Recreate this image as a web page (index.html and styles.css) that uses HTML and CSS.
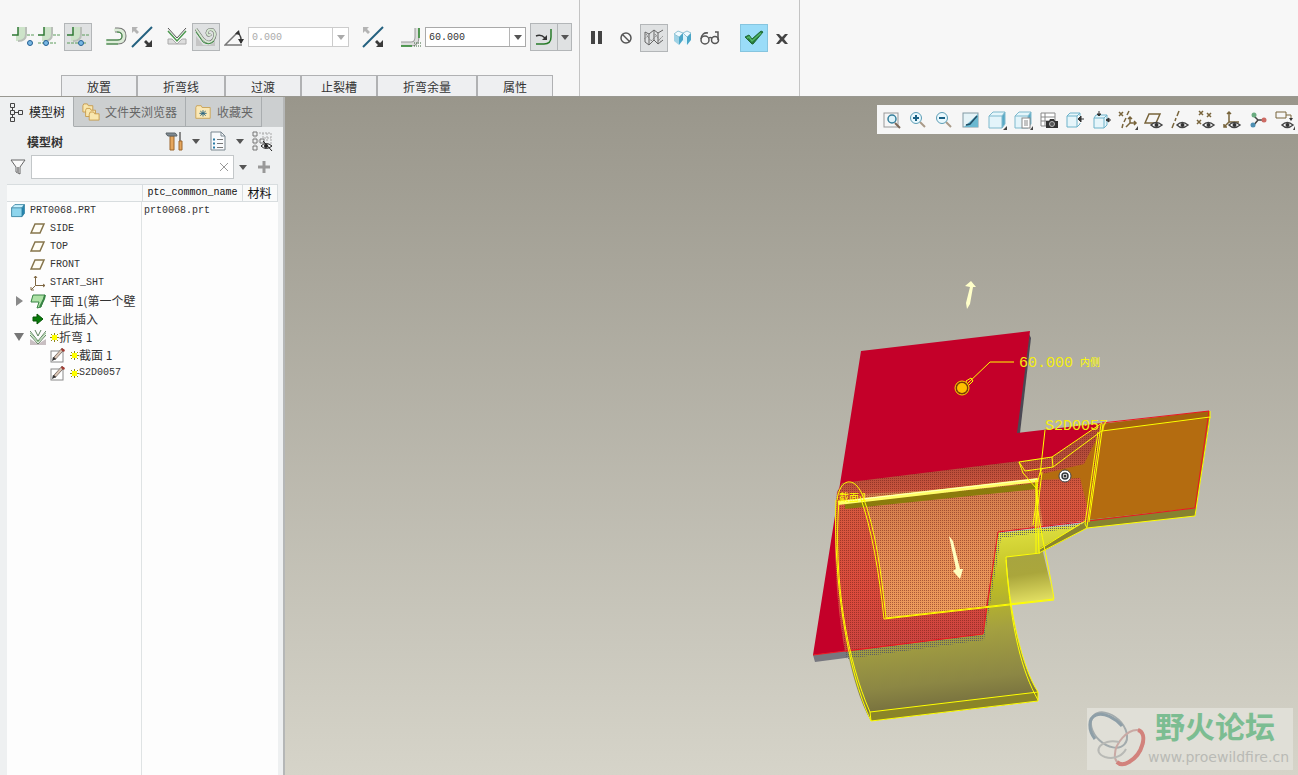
FILE: index.html
```html
<!DOCTYPE html>
<html lang="zh-CN">
<head>
  <meta charset="UTF-8" />
  <meta name="viewport" content="width=device-width, initial-scale=1.0" />
  <title>PRT0068.PRT</title>
  <link rel="stylesheet" href="styles.css">
</head>
<body>

  <!-- shared icons -->
  <svg class="sprite" aria-hidden="true">
    <symbol id="i-corner" viewBox="0 0 22 22">
      <path d="M6 1H14V8Q14 15 7 15H4V9H6Z" fill="#cde3c9" />
      <path d="M14 1V8Q14 15 6 15" fill="none" stroke="#b9bfb8" stroke-width="2" />
      <path d="M6 1V9H0" fill="none" stroke="#2f7a34" stroke-width="1.500" />
      <path d="M15 9H22" stroke="#5c9c5c" stroke-dasharray="3 1" />
    </symbol>
    <symbol id="i-flip" viewBox="0 0 22 22">
      <path d="M1 21L21 1" stroke="#23607f" stroke-width="2" />
      <path d="M1 1H7L5 3L8 6L6 8L3 5L1 7Z" fill="#b4b4b4" />
      <path d="M21 21H14L16 19L13 16L15 14L18 17L21 14Z" fill="#3a3a3a" />
    </symbol>
    <symbol id="i-plane" viewBox="0 0 16 16">
      <path d="M5 3H14L10 12H1Z" fill="#fffdf5" stroke="#86754c" stroke-width="1.500" />
    </symbol>
    <symbol id="i-cube" viewBox="0 0 20 20">
      <path d="M2 6L6 2H18L15 6Z" fill="#e5f6fb" />
      <path d="M15 6L18 2V14L15 18Z" fill="#58a9c6" />
      <rect x="2" y="6" width="13" height="12" rx="1" fill="#e3f4fa" />
      <path d="M2 6L6 2H18V14L15 18H2ZM2 6H15V18M15 6L18 2" fill="none" stroke="#7fb9cd" />
    </symbol>
    <symbol id="i-eye" viewBox="0 0 20 20">
      <path d="M7 15Q12 10 18 15Q12 20 7 15Z" fill="#fff" stroke="#444" stroke-width="1.500" />
      <circle cx="12.500" cy="15" r="2" fill="#333" />
    </symbol>
    <symbol id="i-sketch" viewBox="0 0 16 16">
      <rect x="1" y="4" width="12" height="11" fill="#fff" stroke="#8a8a8a" />
      <path d="M4 12L13 2" stroke="#4f4540" stroke-width="3" />
      <path d="M5 11L12 3" stroke="#dcc7b7" stroke-width="2" />
      <path d="M12 1L15 3L14 5L11 3Z" fill="#a23a32" />
      <path d="M2 14L3 10L6 12Z" fill="#333" />
    </symbol>
    <symbol id="i-star" viewBox="0 0 9 9">
      <path d="M4.500 0V9M0 4.500H9M1 1L8 8M8 1L1 8" stroke="#8f8a10" />
      <rect x="2" y="2" width="5" height="5" fill="#ffff00" />
    </symbol>
    <symbol id="i-down" viewBox="0 0 8 5">
      <path d="M0 0H8L4 5Z" fill="currentColor" />
    </symbol>
  </svg>

  <header class="ribbon">
    <section class="ribbon-main">
      <div class="tools">
        <div class="group">
          <button class="tool" aria-label="折弯线外"><svg viewBox="0 0 22 22"><use href="#i-corner" /><circle cx="18" cy="17" r="2.500" fill="#79b8e4" stroke="#245f93" /></svg></button>
          <button class="tool" aria-label="折弯线内"><svg viewBox="0 0 22 22"><use href="#i-corner" /><path d="M0 17H18" stroke="#5c9c5c" stroke-dasharray="3 1" /><circle cx="8" cy="17" r="2.500" fill="#79b8e4" stroke="#245f93" /></svg></button>
          <button class="tool tile" aria-label="两侧"><svg viewBox="0 0 22 22"><use href="#i-corner" /><path d="M0 17H20" stroke="#5c9c5c" stroke-dasharray="3 1" /><circle cx="14" cy="17" r="2.500" fill="#79b8e4" stroke="#245f93" /></svg></button>
        </div>
        <div class="group">
          <button class="tool" aria-label="更改固定侧"><svg viewBox="0 0 22 22"><path d="M2 16H13Q19 16 19 10Q19 4 13 4H10" fill="none" stroke="#777" stroke-width="5" /><path d="M1 16H13Q19 16 19 10Q19 4 13 4H9" fill="none" stroke="#dcecd8" stroke-width="3" /><path d="M1 14H12Q17 14 17 10Q17 6 12 6M1 18H13" fill="none" stroke="#3e9143" /></svg></button>
          <button class="tool" aria-label="反向"><svg><use href="#i-flip" /></svg></button>
        </div>
        <div class="group">
          <button class="tool" aria-label="角度折弯"><svg viewBox="0 0 22 22"><path d="M2 13H6L11 18L16 13H20V18H2Z" fill="#ddd" stroke="#aaa" /><path d="M2 2L11 12L20 2" fill="none" stroke="#555" /><path d="M2 5L11 15L20 5" fill="none" stroke="#4b984e" stroke-width="1.500" /></svg></button>
          <button class="tool tile" aria-label="滚动折弯"><svg viewBox="0 0 22 22"><path d="M1 10L8 19Q20 21 20 10V20H1Z" fill="#c5c5c5" /><path d="M1 3L8 13Q14 19 18 14Q22 8 18 4Q13 2 12 7Q13 11 16 8" fill="none" stroke="#666" stroke-width="3" /><path d="M1 3L8 13Q14 19 18 14Q22 8 18 4Q13 2 12 7Q13 11 16 8" fill="none" stroke="#d5e8d1" stroke-width="2" /><path d="M1 6L8 16Q14 20 19 15" fill="none" stroke="#3e9143" /></svg></button>
          <button class="tool narrow" aria-label="折弯角度"><svg viewBox="0 0 20 22"><path d="M18 19H1L14 6" fill="none" stroke="#777" stroke-width="1.500" /><path d="M13 6Q18 10 17 17" fill="none" stroke="#444" stroke-width="1.500" /><path d="M11 8L15 4L16 9ZM14 13H20L17 18Z" fill="#333" /></svg></button>
          <div class="combo off"><input type="text" value="0.000" aria-label="角度值" disabled /><button aria-label="角度列表" disabled><svg class="caret"><use href="#i-down" /></svg></button></div>
        </div>
        <div class="group">
          <button class="tool" aria-label="反向角度"><svg><use href="#i-flip" /></svg></button>
        </div>
        <div class="group radius">
          <button class="tool narrow" aria-label="折弯半径"><svg viewBox="0 0 20 22"><path d="M0 18H10Q16 18 16 11V2" fill="none" stroke="#999" stroke-width="5" /><path d="M0 18H10Q16 18 16 11V2" fill="none" stroke="#ddd" stroke-width="3" /><path d="M0 20H11M18 2V12" stroke="#2e8a2f" stroke-width="1.500" /><path d="M13 20H20M13 17H20" stroke="#3b693b" stroke-dasharray="1 1" /></svg></button>
          <div class="combo"><input type="text" value="60.000" aria-label="半径值" /><button aria-label="半径列表"><svg class="caret"><use href="#i-down" /></svg></button></div>
          <div class="split">
            <button aria-label="内侧半径"><svg viewBox="0 0 22 22"><path d="M18 3V11Q18 18 11 18H3" fill="none" stroke="#287b2a" stroke-width="1.500" /><path d="M3 10Q8 8 12 12" fill="none" stroke="#333" stroke-width="1.500" /><path d="M14 9V14H9Z" fill="#333" /></svg></button>
            <button aria-label="半径选项"><svg class="caret"><use href="#i-down" /></svg></button>
          </div>
        </div>
      </div>
      <nav class="ribbon-tabs">
        <button>放置</button>
        <button>折弯线</button>
        <button>过渡</button>
        <button class="tight">止裂槽</button>
        <button>折弯余量</button>
        <button>属性</button>
      </nav>
    </section>
    <section class="ribbon-confirm">
      <div class="group">
        <button class="tool" aria-label="暂停"><svg viewBox="0 0 22 22"><path d="M3 4H7V17H3ZM10 4H14V17H10Z" fill="#444" /></svg></button>
        <button class="tool" aria-label="无预览"><svg viewBox="0 0 22 22"><circle cx="12" cy="11" r="5" fill="none" stroke="#555" stroke-width="1.500" /><path d="M8 7L16 15" stroke="#555" stroke-width="1.500" /></svg></button>
        <button class="tool tile" aria-label="分离预览"><svg viewBox="0 0 22 22"><path d="M2 5L6 7L11 3L15 6L20 3M2 5V15L6 18V7M6 18L11 13V3M11 13L15 17V6M15 17L20 13" fill="none" stroke="#666" /><path d="M1 12L5 9M8 14L14 8M15 14L20 9M3 7L8 14M12 7L18 15" fill="none" stroke="#888" stroke-dasharray="2 1" /></svg></button>
        <button class="tool" aria-label="连接预览"><svg viewBox="0 0 22 22"><path d="M2 7L7 10V18L2 14Z" fill="#9fd2e5" /><path d="M7 10L11 6V13L7 18Z" fill="#4aa6c8" /><path d="M11 6L15 10V18L11 14Z" fill="#dbf4fc" /><path d="M15 10L19 6V13L15 18Z" fill="#4aa6c8" /><path d="M2 7L6 4L11 6L7 10ZM11 6L15 4L19 6L15 10Z" fill="#eefaff" stroke="#8fc2d4" /></svg></button>
        <button class="tool" aria-label="预览"><svg viewBox="0 0 22 22"><circle cx="7" cy="13" r="4" fill="none" stroke="#555" stroke-width="1.500" /><circle cx="17" cy="13" r="3.500" fill="none" stroke="#555" stroke-width="1.500" /><path d="M3 12Q4 5 10 6M11 11Q12 10 14 11M20 13V5H17" fill="none" stroke="#555" stroke-width="1.500" /></svg></button>
      </div>
      <div class="group">
        <button class="tool tile ok" aria-label="确定"><svg viewBox="0 0 22 22"><path d="M2 10L6 8L9 12L18 4L20 5L10 17H9Z" fill="#257a3c" stroke="#1f6a35" /><path d="M4 11L6 10L9 14L18 6" fill="none" stroke="#53b768" stroke-width="1.500" /></svg></button>
        <button class="tool" aria-label="取消"><svg viewBox="0 0 22 22"><path d="M4 7H7L10 10L13 7H16L12 12L16 17H13L10 14L7 17H4L8 12Z" fill="#444" /></svg></button>
      </div>
    </section>
  </header>

  <main>
    <aside class="sidebar">
      <nav class="side-tabs">
        <button class="active"><svg viewBox="0 0 16 20"><path d="M2.500 1.500H6.500V5.500H2.500ZM2.500 8.500H6.500V12.500H2.500ZM2.500 15.500H6.500V19.500H2.500ZM10.500 8.500H14.500V12.500H10.500ZM4.500 5.500V8.500M4.500 12.500V15.500M6.500 10.500H10.500" fill="none" stroke="#444" /></svg>模型树</button>
        <button><svg class="wide" viewBox="0 0 20 20"><g fill="#f9e7ae" stroke="#c79b4c"><path d="M1 3L2 1H6L7 3H12V10H1Z" /><path d="M4 8L5 6H9L10 8H15V15H4Z" /><path d="M8 13L9 10H13L14 12H19V19H8Z" /></g></svg>文件夹浏览器</button>
        <button><svg class="wide" viewBox="0 0 20 20"><path d="M2 5L3 3H8L9 5H18V17H2Z" fill="#fae8b6" stroke="#c9a254" /><path d="M10 8V15M7 9L13 14M13 9L7 14M6 11.500H14" stroke="#23607f" /></svg>收藏夹</button>
      </nav>

      <div class="tree-title">
        <h2>模型树</h2>
        <button aria-label="设置"><svg viewBox="0 0 20 22"><path d="M6 6H10V20H6Z" fill="#e5a65d" stroke="#9c672c" /><path d="M2 3H11Q13 4 13 6H4Q2 5 2 3Z" fill="#7d8890" stroke="#5c6468" /><path d="M16 2V12" stroke="#888" stroke-width="2" /><path d="M15 11H18V20H15Z" fill="#e5a65d" stroke="#9c672c" /></svg></button>
        <button class="arrow" aria-label="设置菜单"><svg class="caret"><use href="#i-down" /></svg></button>
        <button aria-label="显示"><svg viewBox="0 0 20 22"><path d="M3 2H13L17 6V20H3Z" fill="#f8fafc" stroke="#7b8790" /><path d="M13 2V6H17" fill="none" stroke="#7b8790" /><path d="M9 9.500H15M9 13.500H15M9 17.500H15" stroke="#777" /><path d="M5 9.500H7M5 13.500H7M5 17.500H7" stroke="#287ba6" stroke-width="2" /></svg></button>
        <button class="arrow" aria-label="显示菜单"><svg class="caret"><use href="#i-down" /></svg></button>
        <button aria-label="隐藏树项"><svg viewBox="0 0 22 22"><path d="M2 2H6V6H2ZM2 9H6V13H2ZM2 16H6V20H2ZM9 9H13V13H9Z" fill="none" stroke="#777" /><path d="M8 3H20V15M12 3V8M16 3V12M4 6V9M4 13V16M6 11H9M13 8H20" fill="none" stroke="#aaa" stroke-dasharray="2 1" /><path d="M10 16Q15 11 21 16Q15 21 10 16ZM12 11L21 21" fill="none" stroke="#222" /><circle cx="15" cy="16" r="2" fill="#222" /></svg></button>
      </div>

      <div class="search">
        <svg class="funnel" viewBox="0 0 18 18"><path d="M2 2H16L11 9V16L7 14V9Z" fill="#fafafa" stroke="#666" /><path d="M9 9V15" stroke="#999" stroke-width="2" /></svg>
        <div class="search-box"><input type="text" aria-label="搜索模型树" /><button aria-label="清除"><svg viewBox="0 0 10 10"><path d="M1 1L9 9M9 1L1 9" stroke="#999" /></svg></button></div>
        <button class="arrow" aria-label="搜索选项"><svg class="caret"><use href="#i-down" /></svg></button>
        <button class="plus" aria-label="添加"><svg viewBox="0 0 12 12"><path d="M6 0V12M0 6H12" stroke="#999" stroke-width="3" /></svg></button>
      </div>

      <div class="tree-panel">
        <table class="tree">
          <colgroup><col class="c-name"><col class="c-common"><col class="c-mat"></colgroup>
          <thead>
            <tr><th></th><th>ptc_common_name</th><th class="zh">材料</th></tr>
          </thead>
          <tbody>
            <tr><td><div class="node root"><svg viewBox="0 0 20 20"><path d="M2 6L6 2H18L15 6Z" fill="#c9f2ff" /><path d="M15 6L18 2V13L15 17Z" fill="#2688b3" /><path d="M2 6H15V17H2Z" fill="#8ed5ed" /><path d="M2 6L6 2H18V13L15 17H2ZM2 6H15V17M15 6L18 2" fill="none" stroke="#2a7899" /></svg>PRT0068.PRT</div></td><td>prt0068.prt</td><td></td></tr>
            <tr><td><div class="node"><svg><use href="#i-plane" /></svg>SIDE</div></td><td></td><td></td></tr>
            <tr><td><div class="node"><svg><use href="#i-plane" /></svg>TOP</div></td><td></td><td></td></tr>
            <tr><td><div class="node"><svg><use href="#i-plane" /></svg>FRONT</div></td><td></td><td></td></tr>
            <tr><td><div class="node"><svg viewBox="0 0 16 16"><path d="M5.500 1V10.500H15M5.500 10.500L1 15M4 3L5.500 1L7 3M13 9L15 10.500L13 12M1 12V15H4" fill="none" stroke="#7f6742" /></svg>START_SHT</div></td><td></td><td></td></tr>
            <tr><td><div class="node zh"><button class="twist" aria-label="展开"><svg viewBox="0 0 8 10"><path d="M1 0L8 5L1 10Z" fill="#8a8a8a" /></svg></button><svg viewBox="0 0 16 16"><path d="M3 2H15L11 14L7 15L9 9H1Z" fill="#aee2a6" stroke="#388344" /><path d="M15 2L14 6L10 14" fill="none" stroke="#388344" stroke-width="2" /></svg>平面 1(第一个壁</div></td><td></td><td></td></tr>
            <tr><td><div class="node zh"><svg viewBox="0 0 16 16"><path d="M3 6H7V3L13 8L7 13V10H3Z" fill="#087b0a" stroke="#065507" /></svg>在此插入</div></td><td></td><td></td></tr>
            <tr><td><div class="node zh"><button class="twist" aria-label="折叠"><svg viewBox="0 0 10 8"><path d="M0 0H10L5 8Z" fill="#777" /></svg></button><svg viewBox="0 0 16 16"><path d="M0 10L8 15L16 10V16H0Z" fill="#c8bfc2" /><path d="M0 2L8 12L16 2M0 6L8 15L16 6M5 1L8 7L11 1" fill="none" stroke="#5d805c" /><path d="M0 4L8 13L16 4" fill="none" stroke="#93c88e" /></svg><svg class="star"><use href="#i-star" /></svg>折弯 1</div></td><td></td><td></td></tr>
            <tr><td><div class="node deep zh"><svg><use href="#i-sketch" /></svg><svg class="star"><use href="#i-star" /></svg>截面 1</div></td><td></td><td></td></tr>
            <tr><td><div class="node deep"><svg><use href="#i-sketch" /></svg><svg class="star"><use href="#i-star" /></svg>S2D0057</div></td><td></td><td></td></tr>
          </tbody>
        </table>
      </div>
    </aside>

    <section class="viewport">
      <svg class="model" viewBox="285 97 1013 678" preserveAspectRatio="xMaxYMin meet">
        <defs>
          <pattern id="dots" width="2" height="2" patternUnits="userSpaceOnUse">
            <rect width="1" height="1" fill="#6a1c14" fill-opacity="0.500" />
          </pattern>
          <pattern id="grayDots" width="2" height="2" patternUnits="userSpaceOnUse">
            <rect width="1" height="1" fill="#5b5d62" />
          </pattern>
          <linearGradient id="roll" gradientUnits="userSpaceOnUse" x1="940" y1="480" x2="965" y2="715">
            <stop offset="0" stop-color="#8d8730" />
            <stop offset="0.250" stop-color="#dcdd3e" />
            <stop offset="0.450" stop-color="#bfbe22" />
            <stop offset="0.650" stop-color="#a4a040" />
            <stop offset="0.850" stop-color="#8c8744" />
            <stop offset="1" stop-color="#6e673c" />
          </linearGradient>
          <linearGradient id="flange" gradientUnits="userSpaceOnUse" x1="1025" y1="555" x2="1032" y2="602">
            <stop offset="0" stop-color="#a8a53f" />
            <stop offset="0.400" stop-color="#aaa63c" />
            <stop offset="1" stop-color="#e2df62" />
          </linearGradient>
          <linearGradient id="blend" gradientUnits="userSpaceOnUse" x1="940" y1="465" x2="955" y2="640">
            <stop offset="0" stop-color="#b44c3a" />
            <stop offset="0.200" stop-color="#d6583e" />
            <stop offset="0.700" stop-color="#dc4a3c" />
            <stop offset="1" stop-color="#cc4440" />
          </linearGradient>
          <linearGradient id="inner" gradientUnits="userSpaceOnUse" x1="940" y1="490" x2="955" y2="612">
            <stop offset="0" stop-color="#d27c4c" />
            <stop offset="0.400" stop-color="#e28a54" />
            <stop offset="1" stop-color="#ee9c5c" />
          </linearGradient>
        </defs>

        <!-- sheet thickness and top face -->
        <path d="M1029 334L1031 338L1020 433H1016Z" fill="#4b4954" />
        <path d="M813 655L983 634V640L815 662Z" fill="#77777f" />
        <path d="M861 351L1030 331L1017 433L1102 423L1087 520L998 532L983 634L813 655Z" fill="#c40029" />

        <!-- rolled surface -->
        <path d="M843 484L1020 462L1000 533L1087 524L1040 553L1006 557C1009 612 1023 670 1038 692V701L871 721C847 680 831 580 836 500Z" fill="url(#roll)" />
        <path d="M870 712L1038 692V701L871 721Z" fill="#8b8527" />
        <path d="M842 483L1052 457L1102 424L1087 520L998 532L983 634L845 652C836 602 833 550 837 492Z" fill="url(#blend)" />
        <path d="M862 494L1037 484L1043 526L998 532L986 606L886 618C881 572 876 530 862 494Z" fill="url(#inner)" />
        <path d="M842 483L1052 457L1102 424L1087 520L998 532L983 634L845 652C836 602 833 550 837 492Z" fill="url(#dots)" />
        <path d="M845 652L983 634L998 532L1087 520V526L1001 538L984 640L847 659Z" fill="url(#grayDots)" />
        <path d="M1097 438L1084 464L1042 474V480L1080 478L1086 502L1089 510Z" fill="#b46c10" />

        <!-- flat flange on the right -->
        <path d="M1102 424L1210 411L1196 508L1087 520Z" fill="#b46c10" />
        <path d="M1102 424L1210 411V418L1101 431Z" fill="#a4630c" />
        <path d="M1087 520L1196 508L1195 516L1087 528Z" fill="#87822f" />
        <path d="M1210 412V418L1195 516V508Z" fill="#77601a" />
        <path d="M1006 557L1043 552L1054 599L1011 605Z" fill="url(#flange)" />
        <path d="M1040 548L1087 521V528L1040 553Z" fill="#8a8430" />

        <!-- sheet outline -->
        <path d="M1102 423L1209 411L1195 508L998 532L983 634L813 655" fill="none" stroke="#ee1522" />

        <!-- bend line -->
        <path d="M845 506L1037 486" stroke="#8b7b0c" stroke-width="6" />
        <path d="M838 503L1038 480" stroke="#ffff68" stroke-width="4" />
        <path d="M845 501L1037 479" stroke="#ffffc0" />

        <!-- preview wireframe -->
        <g fill="none" stroke="#ffff00">
          <path d="M837 500C840 478 854 476 862 494C876 530 881 572 886 618L1054 599C1048 558 1035 515 1036 480" />
          <path d="M860 496C872 530 879 572 884 619L1054 600" />
          <path d="M836 500C833 580 847 670 871 721L1038 701V692L870 712C847 660 833 580 839 500M870 712L871 721" />
          <path d="M1040 553L1006 557C1009 612 1023 670 1038 692M1006 560C1011 630 1022 672 1038 700" />
          <path d="M1102 423L1052 457L1019 462L1025 471L1053 467L1052 457M1103 430L1053 467M1019 462L1023 473L1036 488" />
          <path d="M1042 469Q1038 475 1037 490L1039 553L1087 528M1036 480V553M1040 549L1085 521" />
          <path d="M1038 490L1033 525M1042 472L1035 530M1045 430L1040 475" />
          <path d="M1101 424L1087 527M1103 424L1089 522M1098 432L1085 524L1087 528" />
          <path d="M1102 431L1210 417L1195 516L1087 528M1210 411V418" />
        </g>

        <!-- direction arrows -->
        <path d="M966 303L967 309L970 304L973 287H976L971 281L965 286L970 287Z" fill="#ffffc9" />
        <path d="M949 536L956 569L953 571L960 579L963 569L960 569L953 541Z" fill="#ffffc0" />

        <!-- radius handle and notes -->
        <path d="M967 384L990 362H1014M966 381L971 378L973 381L968 386Z" fill="none" stroke="#ffff00" />
        <circle cx="962" cy="388" r="7" fill="#7a3c08" stroke="#ffd000" />
        <circle cx="962" cy="388" r="5" fill="#ffc000" />
        <text class="note" x="1019" y="367">60.000</text>
        <text class="note-zh" x="1080" y="366">内侧</text>
        <text class="note" x="1045" y="430">S2D0057</text>
        <text class="note-zh" x="839" y="501">截面 1</text>

        <circle cx="1065" cy="476" r="6" fill="#fff" stroke="#44464a" />
        <circle cx="1065" cy="476" r="3" fill="#fff" stroke="#34383c" stroke-width="1.500" />
        <circle cx="1065" cy="476" r="1.500" fill="#333" />
      </svg>

      <div class="view-bar">
        <button aria-label="重新调整"><svg viewBox="0 0 20 20"><rect x="2" y="3" width="14" height="14" fill="none" stroke="#999" /><path d="M13 13L18 18" stroke="#7d6858" stroke-width="2" /><circle cx="10" cy="9" r="4" fill="#def3fa" stroke="#347e9b" stroke-width="1.500" /></svg></button>
        <button aria-label="放大"><svg viewBox="0 0 20 20"><path d="M12 12L17 17" stroke="#a99a88" stroke-width="2" /><circle cx="8" cy="8" r="5.500" fill="#e9f8fd" stroke="#5c9db5" /><path d="M5 8H11M8 5V11" stroke="#1a6185" stroke-width="2" /></svg></button>
        <button aria-label="缩小"><svg viewBox="0 0 20 20"><path d="M12 12L17 17" stroke="#a99a88" stroke-width="2" /><circle cx="8" cy="8" r="5.500" fill="#e9f8fd" stroke="#5c9db5" /><path d="M5 8H11" stroke="#1a6185" stroke-width="2" /></svg></button>
        <button aria-label="重画"><svg viewBox="0 0 20 20"><rect x="2" y="3" width="15" height="14" fill="#e5f3f7" stroke="#8299a3" /><path d="M17 4V17H3Z" fill="#6bb8d0" /><path d="M5 15L9 14L16 6" fill="none" stroke="#234f66" stroke-width="1.500" /></svg></button>
        <button aria-label="显示样式"><svg viewBox="0 0 20 20"><use href="#i-cube" /><path d="M20 16V20H16Z" fill="#444" /></svg></button>
        <button aria-label="已保存方向"><svg viewBox="0 0 20 20"><use href="#i-cube" /><rect x="9" y="8" width="8" height="10" fill="#fff" stroke="#888" /><path d="M11 11H15M11 13H15M11 15H15" stroke="#888" /><path d="M20 16V20H17Z" fill="#444" /></svg></button>
        <button aria-label="视图管理器"><svg viewBox="0 0 20 20"><path d="M2 3H16V16H2ZM6 3V16M2 7H16M2 11H10" fill="#fff" stroke="#888" /><path d="M7 11H10L11 9H15L16 11H19V18H7Z" fill="#333" /><circle cx="13" cy="14" r="2.500" fill="#555" stroke="#bbb" /></svg></button>
        <button aria-label="透视图"><svg viewBox="0 0 20 20"><path d="M2 6H12V17H2ZM2 6L5 3H15V6M12 6L15 3M15 13V14L12 17" fill="#e6f5fa" stroke="#6fb3ca" /><path d="M19 9H15M13 9L16 6V12Z" fill="#333" stroke="#333" /></svg></button>
        <button aria-label="注释方向"><svg viewBox="0 0 20 20"><path d="M2 8H12V18H2ZM2 8L4 5H15V15L12 18M12 8L15 5" fill="#e6f5fa" stroke="#6fb3ca" /><path d="M7 1V4M5 4L7 6L9 4ZM19 10H16M17 8L14 10L17 12Z" fill="#333" stroke="#333" /></svg></button>
        <button aria-label="基准显示过滤器"><svg viewBox="0 0 20 20"><path d="M1 2L5 6M5 2L1 6M11 1L9 5M8 8L6 12M5 14L4 18M12 7V13H18M12 13L8 17M10 9L12 7L14 9M16 11L18 13L16 15" fill="none" stroke="#78643b" stroke-width="1.500" /><path d="M20 16V20H17Z" fill="#444" /></svg></button>
        <button aria-label="平面显示"><svg viewBox="0 0 20 20"><path d="M5 4H16L12 13H1Z" fill="none" stroke="#78643b" stroke-width="1.500" /><use href="#i-eye" /></svg></button>
        <button aria-label="轴显示"><svg viewBox="0 0 20 20"><path d="M9 1L7 6M6 8L5 11M4 13L2 18" stroke="#78643b" stroke-width="1.500" /><use href="#i-eye" /></svg></button>
        <button aria-label="点显示"><svg viewBox="0 0 20 20"><path d="M3 1L7 5M7 1L3 5M11 3L15 7M15 3L11 7M1 10L5 14M5 10L1 14" stroke="#78643b" stroke-width="1.500" /><use href="#i-eye" /></svg></button>
        <button aria-label="坐标系显示"><svg viewBox="0 0 20 20"><path d="M7 2V12H17M7 12L2 17M5 4L7 2L9 4M2 14V17H5" fill="none" stroke="#78643b" stroke-width="1.500" /><use href="#i-eye" /></svg></button>
        <button aria-label="旋转中心"><svg viewBox="0 0 20 20"><path d="M4 5L9 10L4 16M9 10H15" fill="none" stroke="#444" stroke-width="1.500" /><circle cx="5" cy="5" r="2.500" fill="#6aab80" /><circle cx="4" cy="15" r="2.500" fill="#4d8fb2" /><circle cx="15" cy="10" r="2.500" fill="#cd6b64" /></svg></button>
        <button aria-label="注释显示"><svg viewBox="0 0 20 20"><path d="M1 2H11V8H1ZM11 5H16V9" fill="none" stroke="#78643b" /><path d="M14 8H18L16 11Z" fill="#333" /><use href="#i-eye" /><path d="M20 16V20H18Z" fill="#444" /></svg></button>
      </div>

      <div class="forum">
        <svg viewBox="0 0 60 60"><g fill="none"><ellipse cx="22" cy="22" rx="21" ry="14" transform="rotate(43 22 22)" stroke="#a3abad" stroke-width="2" /><path d="M8 31C1 22 1 10 9 7C17 4 28 10 35 18" stroke="#8e9fa8" stroke-width="3" /><path d="M28 46C28 36 40 21 51 22C63 25 56 48 40 55C32 58 27 53 28 46Z" stroke="#c9a9a4" stroke-width="2" /><path d="M51 22C61 25 56 46 42 54C37 57 33 57 30 54" stroke="#d2827c" stroke-width="4" /><path d="M32 34C14 30 4 44 18 49C28 52 36 47 39 41" stroke="#b8b9b5" stroke-width="2" /></g></svg>
        <div class="forum-text">
          <strong>野火论坛</strong>
          <a href="#">www.proewildfire.cn</a>
        </div>
      </div>
    </section>
  </main>

</body>
</html>
```

FILE: styles.css
```css
* {
  box-sizing: border-box;
}
body {
  margin: 0;
  height: 100vh;
  display: flex;
  flex-direction: column;
  overflow: hidden;
  background-color: #f7f7f7;
  color: #333;
  font-family: "Liberation Sans", "Noto Sans CJK SC", sans-serif;
  font-size: 12px;
}
button {
  display: flex;
  align-items: center;
  justify-content: center;
  padding: 0;
  border: none;
  background: none;
  color: #555;
  font: inherit;
  flex-shrink: 0;
}
.sprite {
  display: none;
}
.caret {
  width: 8px;
  height: 5px;
}

/* ribbon */
.ribbon {
  display: flex;
  height: 97px;
  flex-shrink: 0;
  border-bottom: 1px solid #999891;
}
.ribbon-main {
  display: flex;
  flex-direction: column;
  justify-content: space-between;
  padding-right: 7px;
  border-right: 1px solid #c4c4c4;
}
.tools {
  display: flex;
  gap: 13px;
  padding: 23px 0 0 12px;
}
.group {
  display: flex;
  align-items: center;
  gap: 4px;
  height: 28px;
}
.radius {
  padding-left: 4px;
}
.tool {
  width: 22px;
  height: 28px;
}
.tool svg {
  width: 22px;
  height: 22px;
}
.narrow, .narrow svg {
  width: 20px;
}
.tile {
  width: 28px;
  border: 1px solid #b3b6b8;
  background-color: #dfe1e2;
}
.ok {
  background-color: #9adcf8;
  border-color: #86c5df;
}
.combo {
  display: flex;
  width: 101px;
  height: 20px;
  border: 1px solid #a9a9a9;
  background-color: #fff;
}
.combo input {
  flex: 1;
  min-width: 0;
  padding: 0 3px;
  border: none;
  background: none;
  color: #333;
  font-family: "Liberation Mono", monospace;
  font-size: 10px;
}
.combo button {
  width: 16px;
  border-left: 1px solid #b5b5b5;
}
.combo.off {
  border-color: #ccc;
}
.combo.off input, .combo.off button {
  color: #aaa;
  border-color: #ccc;
}
.split {
  display: flex;
  height: 28px;
  border: 1px solid #b3b6b8;
  background-color: #dfe1e2;
}
.split button {
  width: 26px;
}
.split button + button {
  width: 14px;
  border-left: 1px solid #b3b6b8;
}
.split svg:not(.caret) {
  width: 22px;
  height: 22px;
}
.ribbon-tabs {
  display: flex;
  padding-left: 61px;
}
.ribbon-tabs button {
  height: 21px;
  padding: 0 25px;
  border: 1px solid #b0b1b3;
  border-bottom: none;
  background-color: #eeeff1;
  color: #333;
}
.ribbon-tabs .tight {
  padding: 0 19px;
}
.ribbon-confirm {
  display: flex;
  gap: 20px;
  padding: 24px 5px 0 8px;
  border-right: 1px solid #c4c4c4;
}

/* model tree */
main {
  display: flex;
  flex: 1;
  min-height: 0;
}
.sidebar {
  display: flex;
  flex-direction: column;
  width: 285px;
  flex-shrink: 0;
  background-color: #eef0f1;
  border-right: 2px solid #b5b7b7;
}
.side-tabs {
  display: flex;
  height: 30px;
  background-color: #cccfd0;
}
.side-tabs button {
  gap: 5px;
  padding: 0 8px;
  border-right: 1px solid #a9adaf;
  border-bottom: 1px solid #a9adaf;
  color: #666;
}
.side-tabs .active {
  background-color: #eef0f1;
  border-bottom-color: #eef0f1;
  color: #222;
}
.side-tabs svg {
  width: 16px;
  height: 20px;
}
.side-tabs .wide {
  width: 18px;
}
.tree-title {
  display: flex;
  align-items: center;
  gap: 6px;
  height: 28px;
  padding: 0 10px 0 27px;
}
.tree-title h2 {
  flex: 1;
  margin: 0;
  font-size: 12px;
  font-weight: bold;
}
.tree-title svg:not(.caret) {
  width: 22px;
  height: 22px;
}
.arrow {
  width: 10px;
  height: 20px;
}
.search {
  display: flex;
  align-items: center;
  gap: 4px;
  height: 24px;
  padding: 0 11px 0 9px;
}
.funnel {
  width: 18px;
  height: 18px;
}
.search-box {
  display: flex;
  flex: 1;
  height: 24px;
  border: 1px solid #c3c7c9;
  background-color: #fff;
}
.search-box input {
  flex: 1;
  min-width: 0;
  border: none;
}
.search-box button {
  width: 18px;
}
.search-box svg {
  width: 10px;
  height: 10px;
}
.plus {
  width: 20px;
  padding-left: 4px;
}
.plus svg {
  width: 12px;
  height: 12px;
}
.tree-panel {
  flex: 1;
  margin: 5px 5px 0 7px;
  overflow: hidden;
  background: linear-gradient(#dfe3e4, #dfe3e4) 134px 0 / 1px 100% no-repeat #fdfdfd;
}
.tree {
  width: 100%;
  table-layout: fixed;
  border-collapse: collapse;
  font-family: "Liberation Mono", "Noto Sans CJK SC", monospace;
  font-size: 10px;
}
.c-name {
  width: 135px;
}
.c-common {
  width: 100px;
}
.tree th, .tree td {
  height: 18px;
  padding: 0 0 0 2px;
  overflow: hidden;
  line-height: 16px;
  text-align: left;
  font-weight: normal;
  white-space: nowrap;
}
.tree th {
  height: 17px;
  padding: 0 4px 0 5px;
  border: 1px solid #d8dddf;
  border-left: none;
  background-color: #f9fafa;
  color: #111;
}
.tree td:first-child {
  padding: 0;
}
.tree .zh {
  font-family: "Noto Sans CJK SC", sans-serif;
  font-size: 12px;
}
.node {
  position: relative;
  display: flex;
  align-items: center;
  gap: 4px;
  height: 18px;
  padding-left: 23px;
  overflow: hidden;
}
.node svg {
  width: 16px;
  height: 16px;
  flex-shrink: 0;
}
.node .star {
  width: 9px;
  height: 9px;
  margin-right: -4px;
}
.root {
  padding-left: 3px;
}
.deep {
  padding-left: 43px;
}
.twist {
  position: absolute;
  left: 7px;
  top: 4px;
}
.node .twist svg {
  width: 10px;
  height: 10px;
}

/* graphics area */
.viewport {
  position: relative;
  flex: 1;
  min-width: 0;
  background: linear-gradient(#99968b, #d6d4c9);
}
.model {
  display: block;
  width: 100%;
  height: 100%;
}
.note {
  fill: #f4ee10;
  font-family: "Liberation Mono", monospace;
  font-size: 15px;
}
.note-zh {
  fill: #ffff00;
  font-family: "Noto Sans CJK SC", sans-serif;
  font-size: 10px;
}
.view-bar {
  position: absolute;
  top: 8px;
  right: 0;
  display: flex;
  align-items: center;
  justify-content: space-between;
  width: 421px;
  height: 29px;
  padding-left: 2px;
  background-color: #f6f6f6;
}
.view-bar button {
  width: 26px;
  height: 28px;
}
.view-bar svg {
  width: 20px;
  height: 20px;
}
.forum {
  position: absolute;
  right: 5px;
  bottom: 5px;
  display: flex;
  width: 206px;
  height: 62px;
  background-color: #e0dfd7;
}
.forum svg {
  width: 60px;
  height: 60px;
  flex-shrink: 0;
}
.forum-text {
  display: flex;
  flex-direction: column;
  align-items: flex-end;
  flex: 1;
  margin-left: -4px;
  padding-right: 4px;
}
.forum-text strong {
  padding-right: 14px;
  color: #7cbd92;
  font-size: 30px;
  line-height: 40px;
}
.forum-text a {
  color: #b9bab5;
  font-family: "DejaVu Sans", sans-serif;
  font-size: 14px;
  line-height: 18px;
  text-decoration: none;
}
```
